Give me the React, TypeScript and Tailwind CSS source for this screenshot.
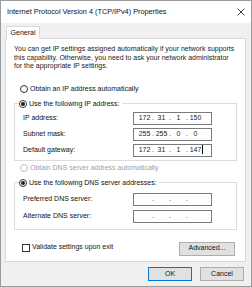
import React from "react";

const Radio = ({ checked, disabled }: { checked?: boolean; disabled?: boolean }) => (
  <span
    className={`inline-flex items-center justify-center w-[8px] h-[8px] rounded-full border ${
      disabled ? "border-[#bcbcbc]" : "border-[#333]"
    } bg-white shrink-0`}
  >
    {checked && <span className="w-[4px] h-[4px] rounded-full bg-[#222]" />}
  </span>
);

const IpBox = ({ parts, caret }: { parts: string[]; caret?: boolean }) => (
  <div className="w-[79px] h-[13px] border border-[#7a7a7a] bg-white flex items-center text-[7px] text-[#222] pl-[4px]">
    <span className="w-[13px] text-center">{parts[0]}</span>
    <span className="w-[4px] text-center">.</span>
    <span className="w-[13px] text-center">{parts[1]}</span>
    <span className="w-[4px] text-center">.</span>
    <span className="w-[13px] text-center">{parts[2]}</span>
    <span className="w-[4px] text-center">.</span>
    <span className="w-[13px] text-center relative">
      {parts[3]}
      {caret && <span className="absolute right-[-1px] top-[0px] w-[1px] h-[9px] bg-black" />}
    </span>
  </div>
);

export default function App() {
  return (
    <div
      className="w-[252px] h-[287px] bg-[#f0f0f0] border border-[#9b9b9b] flex flex-col text-[#111] overflow-hidden"
      style={{ fontFamily: '"Liberation Sans", Arial, sans-serif' }}
    >
      <div className="h-[22px] bg-white flex items-center justify-between pl-[6px] pr-[4px] shrink-0">
        <span className="text-[7.3px] text-[#111]">Internet Protocol Version 4 (TCP/IPv4) Properties</span>
        <svg width="8" height="8" viewBox="0 0 8 8" className="mr-[2px]">
          <path d="M0.5 0.5 L7.5 7.5 M7.5 0.5 L0.5 7.5" stroke="#222" strokeWidth="0.9" />
        </svg>
      </div>
      <div className="pl-[4px] pr-[5px] pt-[2px] flex flex-col">
        <div className="flex">
          <div className="ml-[1px] w-[34px] h-[13px] bg-white border border-b-0 border-[#d9d9d9] flex items-center justify-center text-[7px] relative top-[1px]">
            General
          </div>
        </div>
        <div className="h-[224px] bg-white border border-[#d9d9d9] px-[8px] pt-[6px] flex flex-col">
          <p className="text-[7px] leading-[8.5px] text-[#222]">
            You can get IP settings assigned automatically if your network supports
            this capability. Otherwise, you need to ask your network administrator
            for the appropriate IP settings.
          </p>
          <div className="mt-[13px] ml-[6px] flex items-center gap-[2px] text-[7px]">
            <Radio />
            <span>Obtain an IP address automatically</span>
          </div>
          <div className="mt-[5px] relative">
            <div className="border border-[#dcdcdc] mt-[4px] pt-[8px] pb-[3px] pl-[8px] pr-[24px] flex flex-col gap-[3px]">
              {[
                ["IP address:", ["172", "31", "1", "150"], false],
                ["Subnet mask:", ["255", "255", "0", "0"], false],
                ["Default gateway:", ["172", "31", "1", "147"], true],
              ].map(([label, parts, caret], i) => (
                <div key={i} className="flex items-center justify-between text-[7px]">
                  <span>{label as string}</span>
                  <IpBox parts={parts as string[]} caret={caret as boolean} />
                </div>
              ))}
            </div>
            <div className="absolute left-[5px] top-0 bg-white pr-[2px] flex items-center gap-[2px] text-[7px]">
              <Radio checked />
              <span>Use the following IP address:</span>
            </div>
          </div>
          <div className="mt-[2px] ml-[6px] flex items-center gap-[2px] text-[7px] text-[#a0a0a0]">
            <Radio disabled />
            <span>Obtain DNS server address automatically</span>
          </div>
          <div className="mt-[4px] relative">
            <div className="border border-[#dcdcdc] mt-[4px] pt-[10px] pb-[6px] pl-[8px] pr-[24px] flex flex-col gap-[4px]">
              {["Preferred DNS server:", "Alternate DNS server:"].map((label, i) => (
                <div key={i} className="flex items-center justify-between text-[7px]">
                  <span>{label}</span>
                  <IpBox parts={["", "", "", ""]} />
                </div>
              ))}
            </div>
            <div className="absolute left-[5px] top-0 bg-white pr-[2px] flex items-center gap-[2px] text-[7px]">
              <Radio checked />
              <span>Use the following DNS server addresses:</span>
            </div>
          </div>
          <div className="mt-[12px] flex items-center justify-between pl-[8px] pr-[2px]">
            <div className="flex items-center gap-[2px] text-[7px] mt-[-2px]">
              <span className="w-[8px] h-[8px] border border-[#333] bg-white" />
              <span>Validate settings upon exit</span>
            </div>
            <div className="w-[56px] h-[14px] bg-[#e1e1e1] border border-[#adadad] flex items-center justify-center text-[7px]">
              Advanced...
            </div>
          </div>
        </div>
        <div className="flex justify-end gap-[8px] mt-[5px] pr-[2px]">
          <div className="w-[44px] h-[14px] bg-[#e1e1e1] border border-[#0078d7] flex items-center justify-center text-[7px]">
            OK
          </div>
          <div className="w-[44px] h-[14px] bg-[#e1e1e1] border border-[#adadad] flex items-center justify-center text-[7px]">
            Cancel
          </div>
        </div>
      </div>
    </div>
  );
}
